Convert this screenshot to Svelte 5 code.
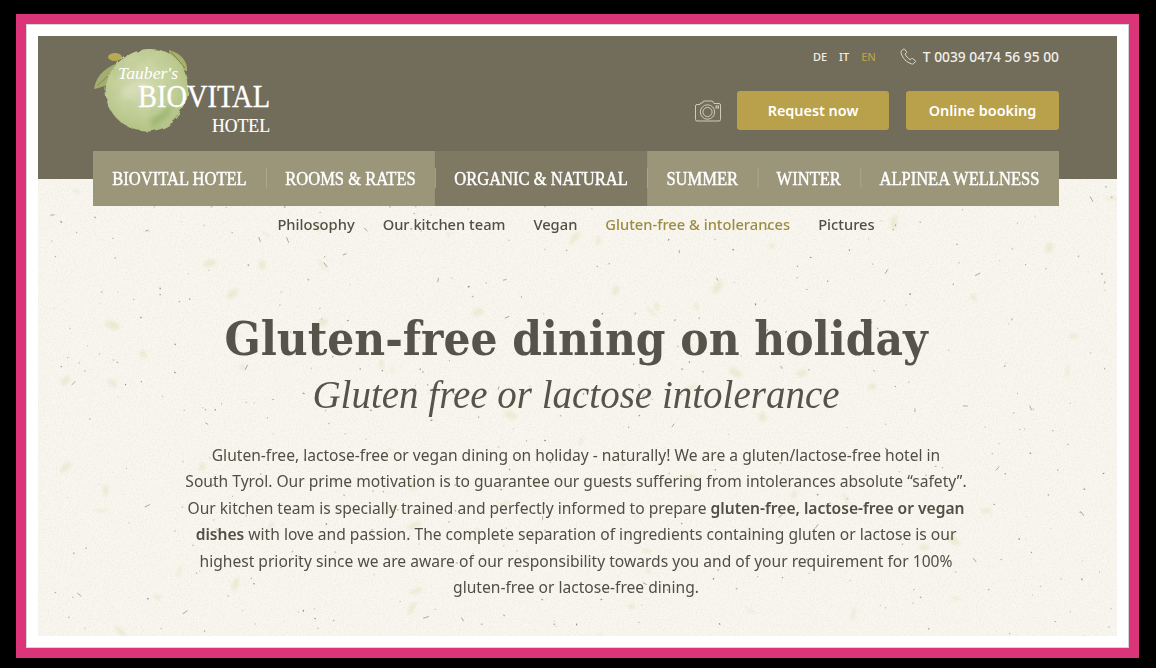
<script>
	const menu = [
		{ label: 'BIOVITAL HOTEL' },
		{ label: 'ROOMS & RATES' },
		{ label: 'ORGANIC & NATURAL', active: true },
		{ label: 'SUMMER' },
		{ label: 'WINTER' },
		{ label: 'ALPINEA WELLNESS' }
	];
	const submenu = [
		{ label: 'Philosophy' },
		{ label: 'Our kitchen team' },
		{ label: 'Vegan' },
		{ label: 'Gluten-free & intolerances', active: true },
		{ label: 'Pictures' }
	];

	// paper fibres, seeded so every render gives the same sheet
	let seed = 4711;
	function rnd() {
		seed = (seed * 16807) % 2147483647;
		return seed / 2147483647;
	}
	const specks = Array.from({ length: 430 }, () => {
		const kind = rnd();
		return {
			x: rnd() * 1079,
			y: rnd() * 457,
			len: kind > 0.85 ? 3 + rnd() * 3 : 0.8 + rnd() * 1.2,
			angle: rnd() * 180,
			colour: kind > 0.65 ? '#94928a' : kind > 0.3 ? '#b4b2a6' : '#cfcdc1',
			width: kind > 0.85 ? 0.7 : 1.2
		};
	});
	const smudges = Array.from({ length: 80 }, () => ({
		x: rnd() * 1079,
		y: rnd() * 457,
		rx: 2 + rnd() * 6,
		ry: 1 + rnd() * 3,
		angle: rnd() * 180
	}));
</script>

<div class="frame">
	<div class="panel">
		<header class="header">
			<div class="top">
				<a class="logo" href="#top" aria-label="Tauber's Biovital Hotel">
					<svg width="200" height="90" viewBox="0 0 200 90">
						<defs>
							<radialGradient id="fruit" cx="0.45" cy="0.42" r="0.62">
								<stop offset="0" stop-color="#d6dcb4" />
								<stop offset="0.6" stop-color="#c3cf98" />
								<stop offset="1" stop-color="#b0bf80" />
							</radialGradient>
							<filter id="wash" x="-10%" y="-10%" width="120%" height="120%">
								<feTurbulence type="fractalNoise" baseFrequency="0.07" numOctaves="3" seed="8" result="n" />
								<feDisplacementMap in="SourceGraphic" in2="n" scale="5" result="shape" />
								<feTurbulence type="fractalNoise" baseFrequency="0.09" numOctaves="3" seed="21" />
								<feColorMatrix values="0 0 0 0 0.50  0 0 0 0 0.58  0 0 0 0 0.30  0 1.600 0 0 -0.680" />
								<feComposite in2="shape" operator="in" result="mottle" />
								<feMerge>
									<feMergeNode in="shape" />
									<feMergeNode in="mottle" />
								</feMerge>
							</filter>
							<filter id="soft"><feGaussianBlur stdDeviation="2.500" /></filter>
						</defs>
						<path d="M1 42C3 28 14 18 32 14 29 30 20 38 1 42Z" fill="#a2ad6f" />
						<path d="M4 39 27 18" stroke="#6f7a4e" stroke-width="0.7" fill="none" />
						<path d="M76 3C88 6 95 15 94 24 84 23 77 15 76 3Z" fill="#a9b06c" />
						<path d="M78 5 92 21" stroke="#5f6a42" stroke-width="0.7" fill="none" />
						<ellipse cx="22" cy="10" rx="7" ry="4" fill="#b6aa55" />
						<g filter="url(#wash)">
							<path d="M55 2C76 1 91 14 95 34 98 58 84 80 60 84 37 87 17 72 13 50 9 26 30 4 55 2Z" fill="url(#fruit)" />
						</g>
						<g filter="url(#soft)">
							<path d="M58 72C66 68 72 62 80 56 78 68 68 78 58 80Z" fill="#88ab62" opacity="0.6" />
							<path d="M26 46C36 60 50 54 58 42 48 30 34 32 26 46Z" fill="#dde0c0" opacity="0.55" />
						</g>
						<text class="tauber" x="25" y="32" textLength="60" lengthAdjust="spacingAndGlyphs">Tauber's</text>
						<text class="bio" x="45" y="60" textLength="132" lengthAdjust="spacingAndGlyphs">BIOVITAL</text>
						<text class="hotel" x="119" y="85" textLength="58" lengthAdjust="spacingAndGlyphs">HOTEL</text>
					</svg>
				</a>
				<div class="tools">
					<div class="meta">
						<nav class="langs">
							<a href="#de">DE</a>
							<a href="#it">IT</a>
							<a href="#en" class="current">EN</a>
						</nav>
						<svg class="phone" width="17" height="17" viewBox="0 0 17 17" fill="none" stroke="#e6e4da" stroke-width="0.9">
							<path d="M1.300 3.200 3.400 1.100c.4-.3.8-.3 1.100.1l2 2.600c.3.4.2.7-.1 1L5.100 6c.6 1.900 3.300 4.900 5.300 5.700l1.100-1.200c.3-.3.7-.3 1.100 0l2.700 2.100c.4.3.4.700.1 1.100l-1.900 2c-.5.400-1.100.500-1.800.200C6 13.900 2.900 10.500 1.100 5.200.9 4.500.9 3.800 1.300 3.200Z" />
						</svg>
						<span class="tel">T 0039 0474 56 95 00</span>
					</div>
					<div class="actions">
						<svg class="camera" width="26" height="22" viewBox="0 0 26 22" fill="none" stroke="#d8d6ca" stroke-width="0.9">
							<path d="M2 4.500h3l.5-1.500h2L8.500 1h9l1.500 2.500h5a1.500 1.500 0 0 1 1.500 1.500v14.500a1.500 1.500 0 0 1-1.500 1.500H2A1.500 1.500 0 0 1 .5 19.500V6A1.500 1.500 0 0 1 2 4.500Z" />
							<circle cx="12.500" cy="12" r="7.200" />
							<circle cx="12.500" cy="12" r="4.600" />
							<rect x="21" y="6" width="2.500" height="2" />
						</svg>
						<a class="btn" href="#request">Request now</a>
						<a class="btn wide" href="#booking">Online booking</a>
					</div>
				</div>
			</div>
			<nav class="menu">
				<div class="menu-row">
					{#each menu as item}
						<a href="#menu" class="menu-item" class:active={item.active}>{item.label}</a>
					{/each}
				</div>
			</nav>
		</header>

		<main class="paper">
			<svg class="fibres" width="1079" height="457" aria-hidden="true">
				<defs>
					<filter id="grain" x="0" y="0" width="100%" height="100%">
						<feTurbulence type="fractalNoise" baseFrequency="0.6" numOctaves="2" seed="3" />
						<feColorMatrix values="0 0 0 0 0.70  0 0 0 0 0.68  0 0 0 0 0.55  0.700 0 0 0 -0.300" />
					</filter>
					<filter id="blur"><feGaussianBlur stdDeviation="1.500" /></filter>
				</defs>
				<rect width="1079" height="457" filter="url(#grain)" />
				<g filter="url(#blur)" opacity="0.6">
					{#each smudges as m}
						<ellipse
							cx={m.x}
							cy={m.y}
							rx={m.rx}
							ry={m.ry}
							fill="#e2e5c2"
							transform="rotate({m.angle} {m.x} {m.y})"
						/>
					{/each}
				</g>
				{#each specks as s}
					<line
						x1={s.x}
						y1={s.y}
						x2={s.x + s.len}
						y2={s.y}
						stroke={s.colour}
						stroke-width={s.width}
						transform="rotate({s.angle} {s.x} {s.y})"
					/>
				{/each}
			</svg>
			<nav class="submenu">
				{#each submenu as item}
					<a href="#sub" class:active={item.active}>{item.label}</a>
				{/each}
			</nav>
			<h1>Gluten-free dining on holiday</h1>
			<h2>Gluten free or lactose intolerance</h2>
			<p>
				Gluten-free, lactose-free or vegan dining on holiday - naturally! We are a gluten/lactose-free hotel in<br />
				South Tyrol. Our prime motivation is to guarantee our guests suffering from intolerances absolute “safety”.<br />
				Our kitchen team is specially trained and perfectly informed to prepare <strong>gluten-free, lactose-free or vegan<br />
				dishes</strong> with love and passion. The complete separation of ingredients containing gluten or lactose is our<br />
				highest priority since we are aware of our responsibility towards you and of your requirement for 100%<br />
				gluten-free or lactose-free dining.
			</p>
		</main>
	</div>
</div>

<style>
	:global(body) {
		background: #000;
	}

	.frame {
		width: 1123px;
		height: 644px;
		box-sizing: border-box;
		margin: 14px 0 0 16px;
		border: 10px solid #dc3478;
	}

	.panel {
		height: 100%;
		box-sizing: border-box;
		padding: 11px;
		background: #fff;
		border: 1px solid #d4d4d4;
		display: flex;
		flex-direction: column;
		font-family: 'Noto Sans', sans-serif;
	}

	a {
		text-decoration: none;
		color: inherit;
	}

	.header {
		background: #726d5b;
		padding: 0 58px 0 55px;
	}

	.top {
		display: flex;
		justify-content: space-between;
		height: 115px;
	}

	.logo {
		display: block;
		margin-top: 11px;
		height: 90px;
	}

	.tauber {
		font: italic 16px 'Liberation Serif', serif;
		fill: #fff;
	}

	.bio {
		font: 32px 'Liberation Serif', serif;
		fill: #fff;
		stroke: #fff;
		stroke-width: 0.3;
	}

	.hotel {
		font: 19px 'Liberation Serif', serif;
		fill: #fff;
		stroke: #fff;
		stroke-width: 0.2;
	}

	.tools {
		display: flex;
		flex-direction: column;
		align-items: flex-end;
	}

	.meta {
		display: flex;
		align-items: center;
		height: 21px;
		margin-top: 10px;
		color: #f2f0e8;
	}

	.langs {
		display: flex;
		gap: 12px;
		font-size: 11px;
		font-weight: 500;
		margin-right: 24px;
	}

	.langs .current {
		color: #b8a04a;
	}

	.phone {
		margin-right: 6px;
	}

	.tel {
		font-size: 13.800px;
		font-weight: 500;
	}

	.actions {
		display: flex;
		align-items: center;
		gap: 17px;
		margin-top: 24px;
	}

	.camera {
		margin-right: -1px;
	}

	.btn {
		width: 152px;
		height: 39px;
		line-height: 39px;
		text-align: center;
		background: #b9a04b;
		border-radius: 3px;
		color: #fff;
		font-size: 14.400px;
		font-weight: 600;
	}

	.btn.wide {
		width: 153px;
	}

	.menu {
		height: 55px;
		margin-bottom: -27px;
		position: relative;
		z-index: 1;
		background: #9b9579;
	}

	/* the menu face is a narrow serif: squeeze the whole row */
	.menu-row {
		display: flex;
		width: 1110px;
		height: 100%;
		transform: scaleX(0.87);
		transform-origin: 0 0;
		font: 19px 'Liberation Serif', serif;
		-webkit-text-stroke: 0.45px #fff;
		color: #fff;
	}

	.menu-item {
		display: flex;
		align-items: center;
		justify-content: center;
		flex: 1 1 auto;
		padding: 0 22px;
		position: relative;
		white-space: nowrap;
	}

	.menu-item + .menu-item::before {
		content: '';
		position: absolute;
		left: 0;
		top: 17px;
		height: 20px;
		border-left: 1px solid #afaa92;
	}

	.menu-item.active {
		background: #7f7963;
	}

	.paper {
		flex: 1;
		position: relative;
		overflow: hidden;
		background: #f8f6ef;
		padding: 27px 58px 0 55px;
		text-align: center;
		color: #514e43;
	}

	.fibres {
		position: absolute;
		left: 0;
		top: 0;
	}

	.submenu {
		position: relative;
		display: flex;
		justify-content: center;
		gap: 28px;
		height: 36px;
		padding-top: 8px;
		font-size: 14.700px;
		font-weight: 500;
	}

	.submenu .active {
		color: #9c8c42;
	}

	h1 {
		position: relative;
		margin: 58px 0 0;
		font: bold 47.200px/62px 'DejaVu Serif', serif;
		font-stretch: condensed;
		color: #55534a;
	}

	h2 {
		position: relative;
		margin: 0;
		font: italic 39px/50px 'Liberation Serif', serif;
		color: #55534a;
	}

	p {
		position: relative;
		margin: 22px 0 0;
		font-size: 15.600px;
		line-height: 26.400px;
	}

	strong {
		font-weight: 600;
	}
</style>
